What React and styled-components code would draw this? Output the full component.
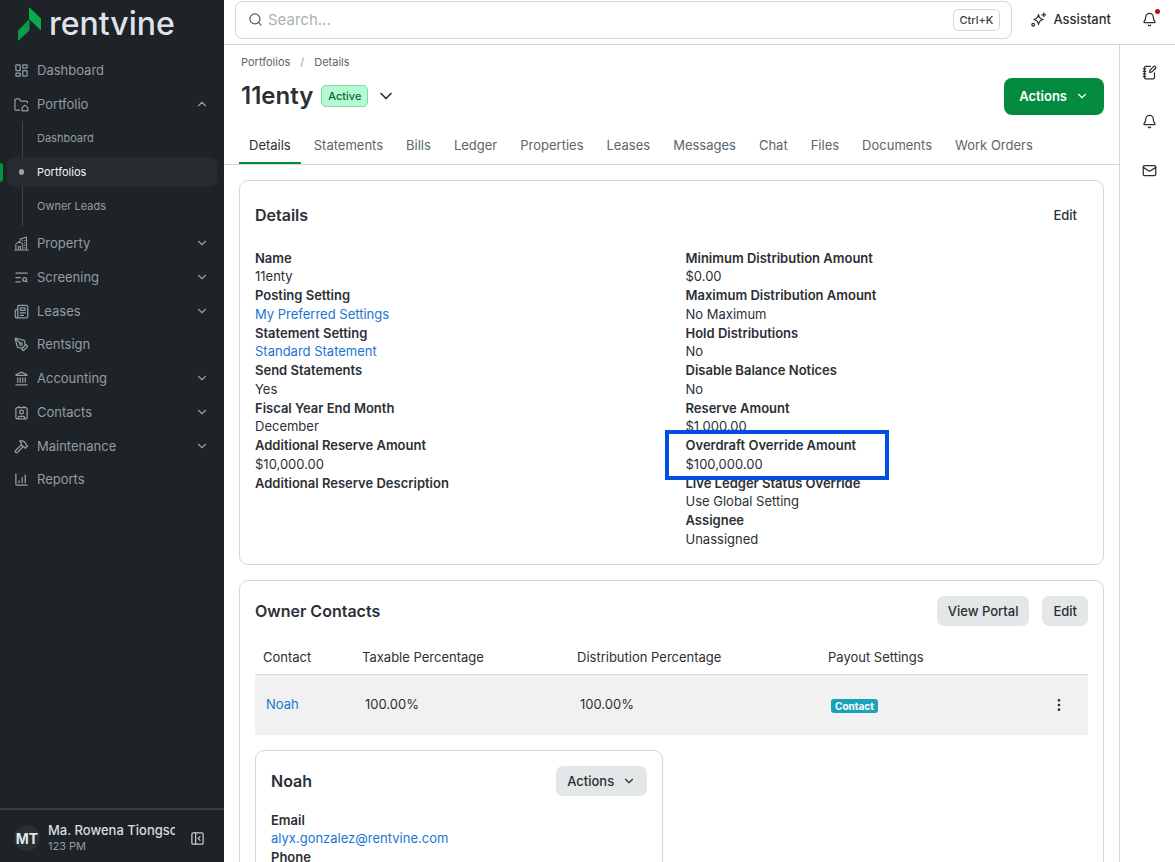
import React from "react";
import styled, { createGlobalStyle } from "styled-components";
import {
  Bell,
  ChartColumnIncreasing,
  ChevronDown,
  ChevronUp,
  Contact,
  EllipsisVertical,
  Hammer,
  Landmark,
  LayoutDashboard,
  Mail,
  Newspaper,
  NotebookPen,
  PanelLeftClose,
  PenTool,
  Search,
  TextSearch
} from "lucide-react";

const GlobalStyle = createGlobalStyle`
  :root {
    --text: #2b3035;
    --muted: #5c666b;
    --line: #d3d7d7;
    --link: #1b75d0;
    --green: #058b40;
    --dark: #1e2327;
    --nav: #929da5;
  }
  * {
    box-sizing: border-box;
  }
  body {
    margin: 0;
    font-family: Inter, "Liberation Sans", sans-serif;
    font-size: 13px;
    line-height: 19px;
    color: var(--text);
    background: #fff;
  }
  button, input {
    font: inherit;
    color: inherit;
  }
  h1, h2, h3, dl, dd, ul {
    margin: 0;
    padding: 0;
  }
  ul {
    list-style: none;
  }
`;

const Shell = styled.div`
  display: grid;
  grid-template-columns: 224px minmax(0, 1fr);
  height: 100vh;
  overflow: hidden;
`;

/* ---------- sidebar ---------- */

const Sidebar = styled.aside`
  display: flex;
  flex-direction: column;
  min-height: 0;
  background: var(--dark);
  color: var(--nav);
`;

const LogoLink = styled.a`
  display: flex;
  align-items: center;
  gap: 7px;
  height: 54px;
  padding: 0 0 6px 17px;
  color: #dfe2e8;
  font-size: 32px;
  font-weight: 500;
  line-height: 40px;
  text-decoration: none;
`;

const Nav = styled.nav`
  flex: 1;
`;

const NavRow = styled.a`
  display: flex;
  align-items: center;
  gap: 8px;
  height: ${props => (props.$group ? 34 : 33)}px;
  padding: 0 15px 0 14px;
  color: inherit;
  text-decoration: none;
  & > span {
    flex: 1;
  }
`;

const SubList = styled.ul`
  position: relative;
  display: flex;
  flex-direction: column;
  gap: 4px;
  padding: 2px 7px 5px;
  font-size: 11px;
  &::before {
    content: "";
    position: absolute;
    left: 22px;
    top: 0;
    bottom: 0;
    width: 1px;
    background: #41484d;
  }
`;

const SubLink = styled.a`
  position: relative;
  display: flex;
  align-items: center;
  height: 30px;
  padding-left: 30px;
  border-radius: 7px;
  text-decoration: none;
  color: ${props => (props.$active ? "#f3f5f6" : "inherit")};
  background: ${props => (props.$active ? "#262b2f" : "none")};
`;

const ActiveMark = styled.i`
  position: absolute;
  left: -7px;
  width: 3px;
  height: 19px;
  border-radius: 0 3px 3px 0;
  background: #00963f;
`;

const ActiveDot = styled.i`
  position: absolute;
  left: 12px;
  width: 5px;
  height: 6px;
  border-radius: 50%;
  background: #9aa3a9;
`;

const UserBar = styled.div`
  display: flex;
  align-items: center;
  gap: 8px;
  height: 54px;
  padding: 4px 19px 0 14px;
  border-top: 2px solid #394045;
`;

const Avatar = styled.span`
  flex: none;
  display: flex;
  align-items: center;
  justify-content: center;
  width: 26px;
  height: 26px;
  border-radius: 50%;
  background: #273032;
  color: #e2e5e8;
  font-size: 14px;
  font-weight: 700;
`;

const UserText = styled.div`
  flex: 1;
  min-width: 0;
  margin-right: 7px;
  overflow: hidden;
  white-space: nowrap;
  font-size: 11px;
  line-height: 16px;
`;

const UserName = styled.div`
  color: #d9dde0;
  font-size: 13px;
  font-weight: 500;
`;

const IconButton = styled.button`
  position: relative;
  display: flex;
  align-items: center;
  justify-content: center;
  padding: 0;
  border: 0;
  background: none;
  cursor: pointer;
`;

/* ---------- top bar ---------- */

const Page = styled.div`
  display: flex;
  flex-direction: column;
  min-width: 0;
  min-height: 0;
`;

const TopBar = styled.header`
  flex: none;
  display: flex;
  align-items: center;
  gap: 19px;
  height: 45px;
  padding: 0 18px 5px 11px;
  border-bottom: 1px solid var(--line);
`;

const SearchBox = styled.label`
  flex: 1;
  display: flex;
  align-items: center;
  gap: 5px;
  height: 38px;
  padding: 0 11px 0 12px;
  border: 1px solid var(--line);
  border-radius: 8px;
  color: #545d62;
`;

const SearchInput = styled.input`
  flex: 1;
  min-width: 0;
  padding: 0;
  border: 0;
  outline: 0;
  background: none;
  font-size: 15px;
  &::placeholder {
    color: #a9b2b5;
    opacity: 1;
  }
`;

const Shortcut = styled.kbd`
  padding: 0 6px;
  border: 1px solid var(--line);
  border-radius: 5px;
  font-family: inherit;
  font-size: 11px;
  font-weight: 500;
  line-height: 20px;
  color: #3a4146;
`;

const AssistantButton = styled.button`
  display: flex;
  align-items: center;
  gap: 7px;
  margin-right: 12px;
  padding: 0;
  border: 0;
  background: none;
  font-weight: 500;
  cursor: pointer;
`;

const AlertDot = styled.span`
  position: absolute;
  top: -3px;
  right: -3px;
  width: 5px;
  height: 5px;
  border-radius: 50%;
  background: #c60c12;
`;

/* ---------- body ---------- */

const Body = styled.div`
  flex: 1;
  display: flex;
  min-height: 0;
`;

const Content = styled.main`
  flex: 1;
  min-width: 0;
  overflow-y: auto;
  scrollbar-width: none;
`;

const Rail = styled.div`
  display: flex;
  flex-direction: column;
  align-items: center;
  gap: 34px;
  width: 56px;
  padding: 20px 0 0 4px;
  border-left: 1px solid var(--line);
`;

const Breadcrumb = styled.nav`
  display: flex;
  gap: 10px;
  padding: 8px 17px 0;
  font-size: 11px;
  color: #9da5a8;
  & > a {
    color: var(--muted);
    text-decoration: none;
  }
`;

const TitleRow = styled.div`
  display: flex;
  align-items: center;
  gap: 8px;
  padding: 5px 15px 0 17px;
`;

const Title = styled.h1`
  font-size: 24px;
  font-weight: 600;
  line-height: 38px;
`;

const StatusBadge = styled.span`
  padding: 0 6px;
  border: 1px solid #7cd7a2;
  border-radius: 5px;
  background: #b4fbd1;
  color: #0c6636;
  font-size: 11px;
  font-weight: 500;
  line-height: 20px;
`;

const Button = styled.button`
  display: flex;
  align-items: center;
  justify-content: center;
  gap: 8px;
  height: ${props => (props.$primary ? 37 : 30)}px;
  margin-left: ${props => (props.$push ? "auto" : 0)};
  padding: 0 ${props => (props.$primary ? 15 : 11)}px;
  border: 0;
  border-radius: ${props => (props.$primary ? 8 : 7)}px;
  background: ${props =>
    props.$primary ? "var(--green)" : props.$plain ? "none" : "#e3e7e7"};
  color: ${props => (props.$primary ? "#fff" : "inherit")};
  font-weight: ${props => (props.$primary ? 600 : 500)};
  cursor: pointer;
`;

const Tabs = styled.nav`
  display: flex;
  gap: 3px;
  padding: 12px 15px 0;
  border-bottom: 1px solid var(--line);
`;

const Tab = styled.a`
  padding: 8px 10px 7px;
  border-bottom: 2px solid
    ${props => (props.$active ? "var(--green)" : "transparent")};
  color: ${props => (props.$active ? "var(--text)" : "var(--muted)")};
  line-height: 20px;
  text-decoration: none;
  white-space: nowrap;
`;

const Cards = styled.div`
  display: flex;
  flex-direction: column;
  gap: 15px;
  padding: 15px 15px 30px;
`;

const Card = styled.section`
  width: ${props => (props.$half ? "49%" : "auto")};
  padding: ${props => (props.$tall ? "19px 15px 15px" : "15px")};
  border: 1px solid var(--line);
  border-radius: 9px;
`;

const CardHead = styled.div`
  display: flex;
  align-items: center;
  gap: 13px;
  margin-bottom: ${props => props.$space || 15}px;
`;

const CardTitle = styled.h2`
  flex: 1;
  font-size: 16px;
  font-weight: 600;
`;

const Columns = styled.div`
  display: grid;
  grid-template-columns: 1fr 1fr;
  gap: 28px;
`;

const Field = styled.div`
  position: relative;
  & > dt {
    font-weight: 600;
  }
  &:nth-child(odd) > dt {
    line-height: 18px;
  }
  & a {
    color: var(--link);
    text-decoration: none;
  }
`;

const Highlight = styled.span`
  position: absolute;
  z-index: 1;
  top: -6px;
  left: -21px;
  width: 224px;
  height: 50px;
  border: 4px solid #004fe0;
  pointer-events: none;
`;

const Table = styled.table`
  width: 100%;
  margin-bottom: 15px;
  border-collapse: collapse;
  table-layout: fixed;
  text-align: left;
`;

const Col = styled.col`
  width: ${props => props.$width || "auto"};
`;

const Th = styled.th`
  height: 33px;
  padding: 0 8px;
  border-bottom: 1px solid #d9dcdc;
  font-weight: 400;
`;

const Td = styled.td`
  height: 61px;
  padding: 0 11px;
  background: #f1f1f1;
  & > a {
    color: var(--link);
    text-decoration: none;
  }
  & > button {
    margin-left: auto;
    margin-right: 10px;
  }
`;

const Tag = styled.span`
  display: inline-block;
  padding: 0 4px;
  border-radius: 3px;
  background: #1aa2b8;
  color: #fff;
  font-size: 10px;
  font-weight: 700;
  line-height: 14px;
  vertical-align: middle;
`;

/* ---------- icons ---------- */

const Icon = ({ size = 15, children, ...rest }) => (
  <svg
    width={size}
    height={size}
    viewBox="0 0 24 24"
    fill="none"
    stroke="currentColor"
    strokeWidth="2"
    strokeLinecap="round"
    strokeLinejoin="round"
    aria-hidden="true"
    {...rest}
  >
    {children}
  </svg>
);

const FolderHome = props => (
  <Icon {...props}>
    <path d="M9 21H3.500a2 2 0 0 1-2-2V5a2 2 0 0 1 2-2H8l3 3.500h8.500a2 2 0 0 1 2 2v1" />
    <path d="M13 22v-5l4.500-4 4.500 4v5z" />
  </Icon>
);

const Buildings = props => (
  <Icon {...props} strokeWidth="1.7">
    <path d="M1 22.500h22M3 22V13l5.500-4.500L14 13v9M7 22v-5h3.500v5" />
    <path d="M10 7V5l10-3.500V22M13.500 7.500h.5M17 7h.5M17 11h.5M17 15h.5M17 19h.5" />
  </Icon>
);

const Sparkles = props => (
  <Icon {...props}>
    <path d="M12 4c.8 5 2.500 7.200 7.500 8-5 .8-6.700 3-7.500 8-.8-5-2.500-7.200-7.500-8 5-.8 6.700-3 7.500-8z" />
    <path d="M20.500 1.500v6M17.500 4.500h6" />
    <circle cx="3.500" cy="20.500" r="2.200" />
  </Icon>
);

const LogoMark = () => (
  <svg width="25" height="34" viewBox="0 0 25 34" aria-hidden="true">
    <path d="M1 23.500 12.500 12v11.500L1 34z" fill="#0b9b46" />
    <path d="M12 0l12 11.500v12L12 12z" fill="#05ad4c" />
  </svg>
);

const portfolioLinks = ["Dashboard", "Portfolios", "Owner Leads"];

const navItems = [
  { label: "Dashboard", icon: LayoutDashboard },
  { label: "Portfolio", icon: FolderHome, group: true, links: portfolioLinks },
  { label: "Property", icon: Buildings, group: true },
  { label: "Screening", icon: TextSearch, group: true },
  { label: "Leases", icon: Newspaper, group: true },
  { label: "Rentsign", icon: PenTool },
  { label: "Accounting", icon: Landmark, group: true },
  { label: "Contacts", icon: Contact, group: true },
  { label: "Maintenance", icon: Hammer, group: true },
  { label: "Reports", icon: ChartColumnIncreasing }
];

const tabs = [
  "Details",
  "Statements",
  "Bills",
  "Ledger",
  "Properties",
  "Leases",
  "Messages",
  "Chat",
  "Files",
  "Documents",
  "Work Orders"
];

const leftFields = [
  { label: "Name", value: "11enty" },
  { label: "Posting Setting", value: "My Preferred Settings", link: true },
  { label: "Statement Setting", value: "Standard Statement", link: true },
  { label: "Send Statements", value: "Yes" },
  { label: "Fiscal Year End Month", value: "December" },
  { label: "Additional Reserve Amount", value: "$10,000.00" },
  { label: "Additional Reserve Description", value: "" }
];

const rightFields = [
  { label: "Minimum Distribution Amount", value: "$0.00" },
  { label: "Maximum Distribution Amount", value: "No Maximum" },
  { label: "Hold Distributions", value: "No" },
  { label: "Disable Balance Notices", value: "No" },
  { label: "Reserve Amount", value: "$1,000.00" },
  { label: "Overdraft Override Amount", value: "$100,000.00", marked: true },
  { label: "Live Ledger Status Override", value: "Use Global Setting" },
  { label: "Assignee", value: "Unassigned" }
];

const contactFields = [
  { label: "Email", value: "alyx.gonzalez@rentvine.com", link: true },
  { label: "Phone", value: "" }
];

const Fields = ({ items }) => (
  <dl>
    {items.map(item => (
      <Field key={item.label}>
        <dt>{item.label}</dt>
        <dd>{item.link ? <a href="#">{item.value}</a> : item.value}</dd>
        {item.marked && <Highlight />}
      </Field>
    ))}
  </dl>
);

const NavItem = ({ label, icon: ItemIcon, group, links }) => (
  <>
    <NavRow href="#" $group={group}>
      <ItemIcon size={15} />
      <span>{label}</span>
      {group && (links ? <ChevronUp size={14} /> : <ChevronDown size={14} />)}
    </NavRow>
    {links && (
      <SubList>
        {links.map(link => {
          const active = link === "Portfolios";
          return (
            <li key={link}>
              <SubLink href="#" $active={active}>
                {active && <ActiveMark />}
                {active && <ActiveDot />}
                {link}
              </SubLink>
            </li>
          );
        })}
      </SubList>
    )}
  </>
);

const App = () => (
  <Shell>
    <GlobalStyle />
    <Sidebar>
      <LogoLink href="#">
        <LogoMark />
        rentvine
      </LogoLink>
      <Nav>
        {navItems.map(item => (
          <NavItem key={item.label} {...item} />
        ))}
      </Nav>
      <UserBar>
        <Avatar>MT</Avatar>
        <UserText>
          <UserName>Ma. Rowena Tiongson</UserName>
          123 PM
        </UserText>
        <IconButton aria-label="Collapse sidebar">
          <PanelLeftClose size={15} color="#c4cacd" />
        </IconButton>
      </UserBar>
    </Sidebar>
    <Page>
      <TopBar>
        <SearchBox>
          <Search size={15} />
          <SearchInput type="text" placeholder="Search..." aria-label="Search" />
          <Shortcut>Ctrl+K</Shortcut>
        </SearchBox>
        <AssistantButton>
          <Sparkles size={15} />
          Assistant
        </AssistantButton>
        <IconButton aria-label="Notifications">
          <Bell size={15} />
          <AlertDot />
        </IconButton>
      </TopBar>
      <Body>
        <Content>
          <Breadcrumb>
            <a href="#">Portfolios</a>
            <span>/</span>
            <a href="#">Details</a>
          </Breadcrumb>
          <TitleRow>
            <Title>11enty</Title>
            <StatusBadge>Active</StatusBadge>
            <IconButton aria-label="Switch portfolio">
              <ChevronDown size={20} />
            </IconButton>
            <Button $primary $push>
              Actions
              <ChevronDown size={14} />
            </Button>
          </TitleRow>
          <Tabs>
            {tabs.map(tab => (
              <Tab key={tab} href="#" $active={tab === "Details"}>
                {tab}
              </Tab>
            ))}
          </Tabs>
          <Cards>
            <Card $tall>
              <CardHead $space={19}>
                <CardTitle>Details</CardTitle>
                <Button $plain>Edit</Button>
              </CardHead>
              <Columns>
                <Fields items={leftFields} />
                <Fields items={rightFields} />
              </Columns>
            </Card>
            <Card>
              <CardHead>
                <CardTitle>Owner Contacts</CardTitle>
                <Button>View Portal</Button>
                <Button>Edit</Button>
              </CardHead>
              <Table>
                <colgroup>
                  <Col $width="99px" />
                  <Col $width="215px" />
                  <Col $width="251px" />
                  <Col />
                  <Col $width="60px" />
                </colgroup>
                <thead>
                  <tr>
                    <Th>Contact</Th>
                    <Th>Taxable Percentage</Th>
                    <Th>Distribution Percentage</Th>
                    <Th>Payout Settings</Th>
                    <Th />
                  </tr>
                </thead>
                <tbody>
                  <tr>
                    <Td>
                      <a href="#">Noah</a>
                    </Td>
                    <Td>100.00%</Td>
                    <Td>100.00%</Td>
                    <Td>
                      <Tag>Contact</Tag>
                    </Td>
                    <Td>
                      <IconButton aria-label="Contact options">
                        <EllipsisVertical size={16} />
                      </IconButton>
                    </Td>
                  </tr>
                </tbody>
              </Table>
              <Card $half>
                <CardHead>
                  <CardTitle as="h3">Noah</CardTitle>
                  <Button>
                    Actions
                    <ChevronDown size={14} />
                  </Button>
                </CardHead>
                <Fields items={contactFields} />
              </Card>
            </Card>
          </Cards>
        </Content>
        <Rail>
          <IconButton aria-label="Notes">
            <NotebookPen size={15} />
          </IconButton>
          <IconButton aria-label="Alerts">
            <Bell size={15} />
          </IconButton>
          <IconButton aria-label="Messages">
            <Mail size={15} />
          </IconButton>
        </Rail>
      </Body>
    </Page>
  </Shell>
);

export default App;
